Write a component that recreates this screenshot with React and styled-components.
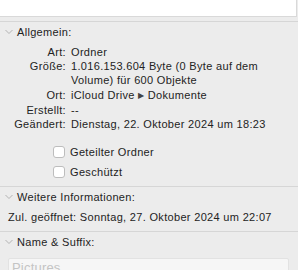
import React from "react";
import styled, { createGlobalStyle } from "styled-components";

const GlobalStyle = createGlobalStyle`
  html, body {
    margin: 0;
    padding: 0;
    background: #ececec;
  }
`;

const Page = styled.div`
  width: 298px;
  height: 270px;
  overflow: hidden;
  background: #ececec;
  font-family: "Liberation Sans", Arial, sans-serif;
  font-size: 11px;
  letter-spacing: 0.32px;
  color: #232323;
  display: flex;
  flex-direction: column;
`;

const Preview = styled.div`
  width: 297px;
  height: 17px;
  box-sizing: border-box;
  background: #ffffff;
  border-right: 1px solid #d9d9d9;
  border-bottom: 1px solid #d9d9d9;
  flex-shrink: 0;
`;

const Separator = styled.div`
  height: 1px;
  background: #d6d6d6;
  margin-top: ${({ mt }) => mt || 0}px;
  flex-shrink: 0;
`;

const Header = styled.div`
  display: flex;
  align-items: center;
  height: 20px;
  padding-left: 5px;
  gap: 4px;
  flex-shrink: 0;
`;

const Chevron = () => (
  <svg width="8" height="6" viewBox="0 0 8 6">
    <path d="M0.5 1 L4 4.5 L7.5 1" fill="none" stroke="#b3b3b3" strokeWidth="1" />
  </svg>
);

const Details = styled.div`
  display: grid;
  grid-template-columns: 66px 204px;
  column-gap: 5px;
  line-height: 14px;
  padding-top: 3px;
  row-gap: 0.3px;
`;

const Label = styled.div`
  text-align: right;
  white-space: nowrap;
`;

const Value = styled.div`
  white-space: ${({ wrap }) => (wrap ? "normal" : "nowrap")};
`;

const PathArrow = styled.span`
  font-size: 8px;
  vertical-align: 1px;
  color: #444;
`;

const Checks = styled.div`
  display: flex;
  flex-direction: column;
  gap: 4px;
  padding: 13px 0 6px 53px;
`;

const CheckRow = styled.label`
  display: flex;
  align-items: center;
  height: 16px;
  gap: 5px;
`;

const Box = styled.span`
  width: 12px;
  height: 12px;
  box-sizing: border-box;
  border: 1px solid #bdbdbd;
  border-radius: 3px;
  background: #ffffff;
  flex-shrink: 0;
`;

const InfoLine = styled.div`
  line-height: 14px;
  padding: 3px 0 7px 8px;
  white-space: nowrap;
`;

const Field = styled.div`
  margin: 6px 0 0 8px;
  width: 281px;
  height: 22px;
  box-sizing: border-box;
  background: #f6f6f6;
  border: 1px solid #e2e2e2;
  border-radius: 2px;
  padding: 1px 0 0 3px;
  font-size: 13px;
  letter-spacing: 0.2px;
  line-height: 16px;
  color: #c4c4c4;
  flex-shrink: 0;
`;

const rows = [
  ["Art:", "Ordner"],
  ["Größe:", "1.016.153.604 Byte (0 Byte auf dem Volume) für 600 Objekte", true],
  [
    "Ort:",
    <>
      iCloud Drive <PathArrow>▶</PathArrow> Dokumente
    </>,
  ],
  ["Erstellt:", "--"],
  ["Geändert:", "Dienstag, 22. Oktober 2024 um 18:23"],
];

export default function App() {
  return (
    <>
      <GlobalStyle />
      <Page>
        <Preview />
        <Separator mt={4} />
        <Header>
          <Chevron />
          Allgemein:
        </Header>
        <Details>
          {rows.map(([label, value, wrap]) => (
            <React.Fragment key={label}>
              <Label>{label}</Label>
              <Value wrap={wrap ? 1 : 0}>{value}</Value>
            </React.Fragment>
          ))}
        </Details>
        <Checks>
          <CheckRow>
            <Box />
            Geteilter Ordner
          </CheckRow>
          <CheckRow>
            <Box />
            Geschützt
          </CheckRow>
        </Checks>
        <Separator />
        <Header>
          <Chevron />
          Weitere Informationen:
        </Header>
        <InfoLine>Zul. geöffnet: Sonntag, 27. Oktober 2024 um 22:07</InfoLine>
        <Separator />
        <Header>
          <Chevron />
          Name &amp; Suffix:
        </Header>
        <Field>Pictures</Field>
      </Page>
    </>
  );
}
